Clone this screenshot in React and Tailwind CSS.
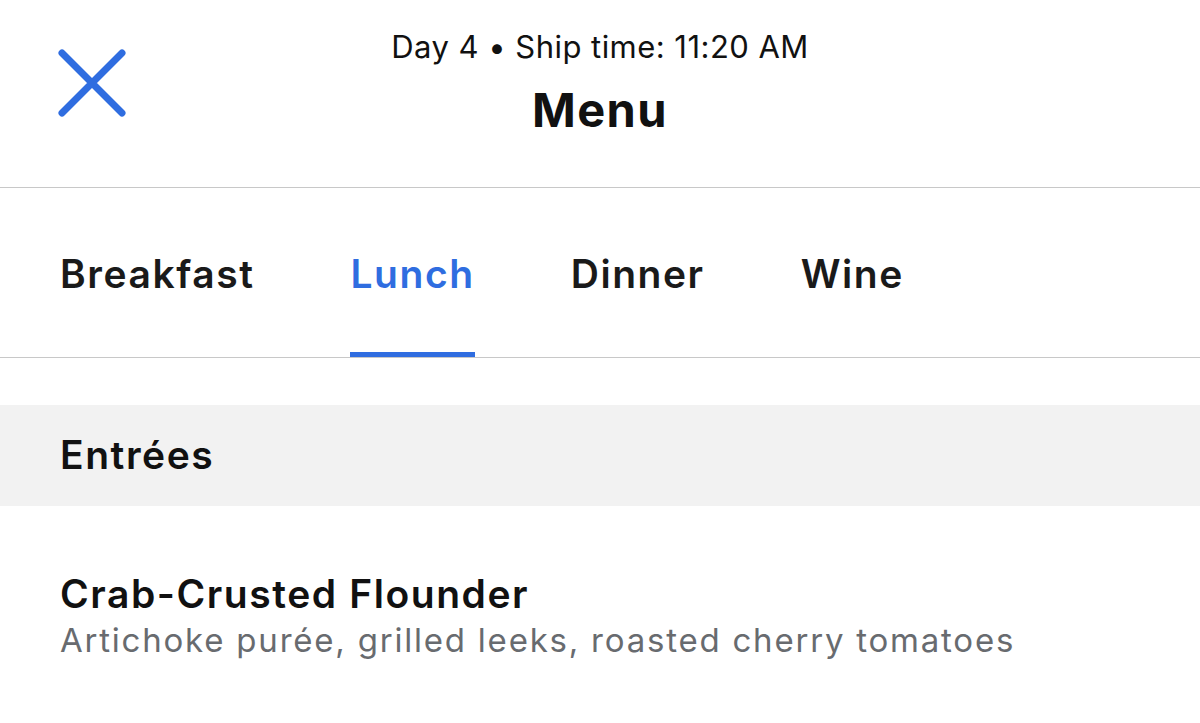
import React, { useState } from 'react';

const tabs = ['Breakfast', 'Lunch', 'Dinner', 'Wine'];

function CloseIcon() {
    return (
        <svg width="72" height="72" viewBox="0 0 72 72" fill="none">
            <path d="M6 6L66 66M66 6L6 66" stroke="#2f6de0" strokeWidth="7" strokeLinecap="round" />
        </svg>
    );
}

function App() {
    const [active, setActive] = useState('Lunch');

    return (
        <div className="w-[1200px] h-[723px] overflow-hidden bg-white text-[#111] font-['Inter','Liberation_Sans',sans-serif]">
            {/* Header */}
            <header className="relative h-[188px] border-b border-[#c8c8c8] flex flex-col items-center">
                <button className="absolute left-[56px] top-[47px]">
                    <CloseIcon />
                </button>
                <div className="mt-[27px] text-[31px] leading-[40px] tracking-[0.015em]">Day 4 • Ship time: 11:20 AM</div>
                <h1 className="mt-[18px] text-[47px] leading-[50px] font-bold tracking-[0.03em]">Menu</h1>
            </header>

            {/* Tabs */}
            <nav className="flex gap-[96px] px-[60px] border-b border-[#c8c8c8]">
                {tabs.map(tab => (
                    <button
                        key={tab}
                        onClick={() => setActive(tab)}
                        className={
                            tab === active
                                ? 'h-[169px] pt-[8px] flex items-center text-[39px] font-semibold tracking-[0.04em] text-[#2f6de0] border-b-[5px] border-[#2f6de0]'
                                : 'h-[169px] pt-[8px] flex items-center text-[39px] font-semibold tracking-[0.04em] text-[#1a1a1a] border-b-[5px] border-transparent'
                        }
                    >
                        {tab}
                    </button>
                ))}
            </nav>

            {/* Section */}
            <div className="mt-[47px] h-[101px] bg-[#f2f2f2] px-[60px] flex items-center">
                <h2 className="text-[39px] font-semibold tracking-[0.04em]">Entrées</h2>
            </div>

            <div className="px-[60px] pt-[65px]">
                <div className="text-[39px] leading-[46px] font-semibold tracking-[0.04em]">Crab-Crusted Flounder</div>
                <div className="text-[33px] leading-[46px] tracking-[0.054em] text-[#686b6f]">Artichoke purée, grilled leeks, roasted cherry tomatoes</div>
            </div>
        </div>
    );
}

export default App;
